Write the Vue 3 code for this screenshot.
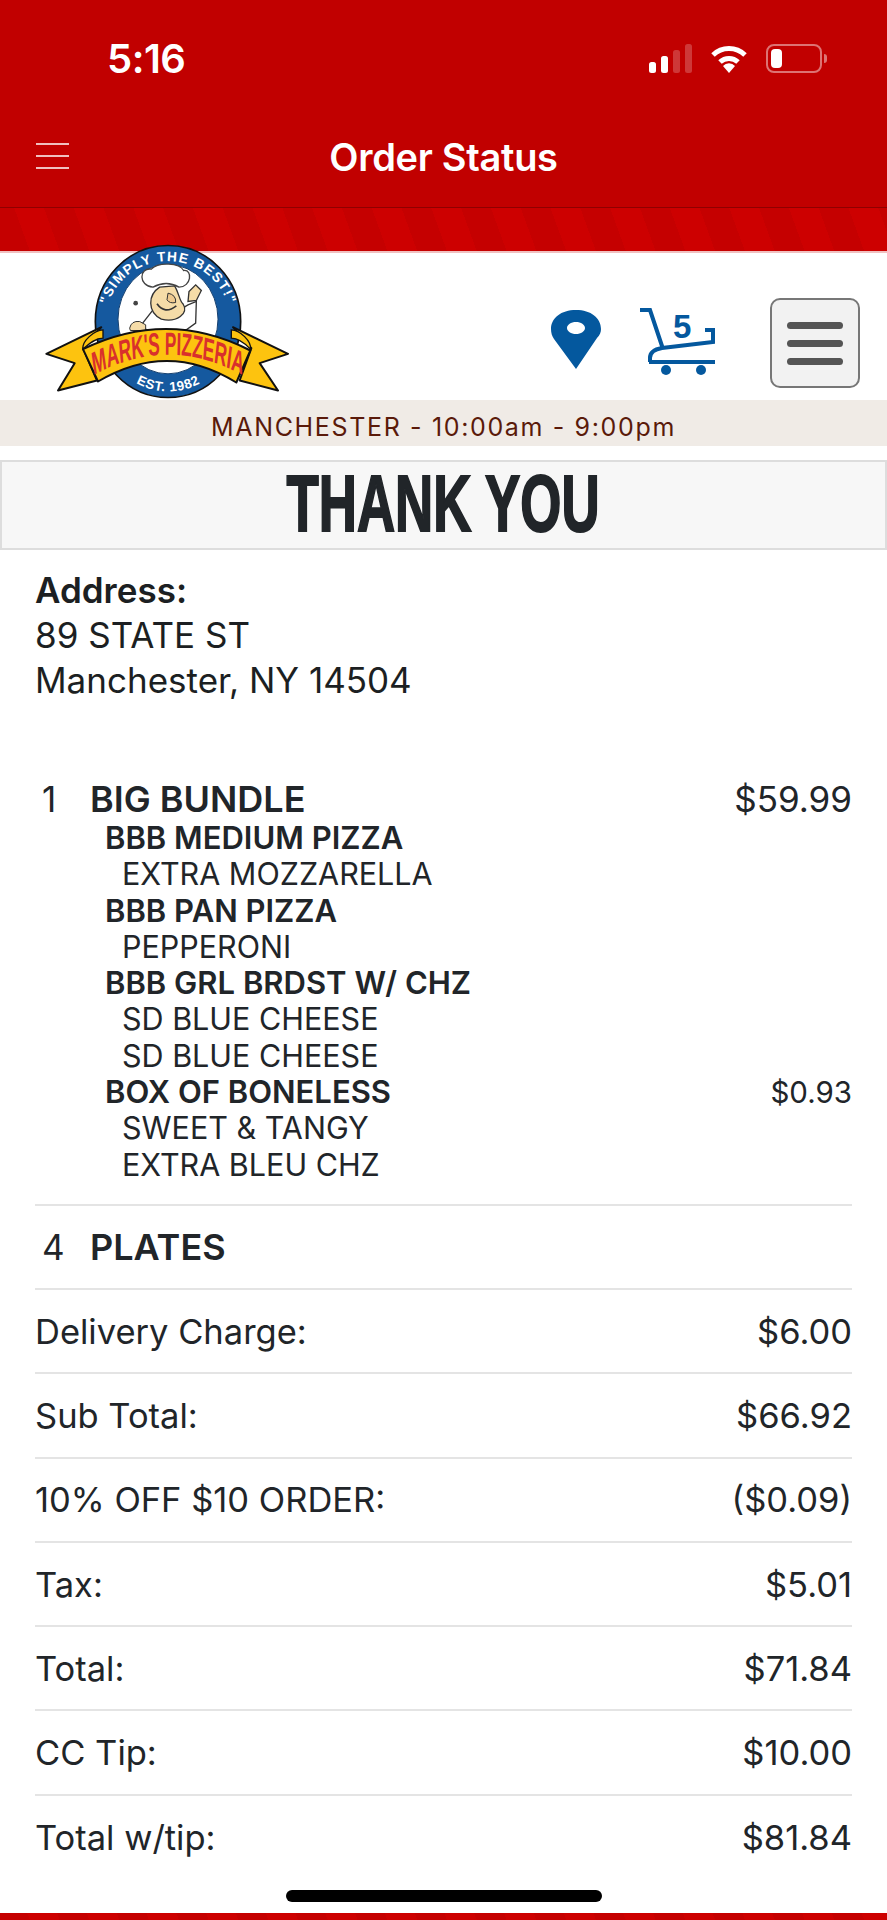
<script setup>
const items = [
  { t: 'BBB MEDIUM PIZZA', s: ['EXTRA MOZZARELLA'] },
  { t: 'BBB PAN PIZZA', s: ['PEPPERONI'] },
  { t: 'BBB GRL BRDST W/ CHZ', s: ['SD BLUE CHEESE', 'SD BLUE CHEESE'] },
  { t: 'BOX OF BONELESS', p: '$0.93', s: ['SWEET & TANGY', 'EXTRA BLEU CHZ'] },
]
const totals = [
  ['Delivery Charge:', '$6.00'],
  ['Sub Total:', '$66.92'],
  ['10% OFF $10 ORDER:', '($0.09)'],
  ['Tax:', '$5.01'],
  ['Total:', '$71.84'],
  ['CC Tip:', '$10.00'],
  ['Total w/tip:', '$81.84'],
]
</script>

<template>
  <div class="page">
    <header class="top">
      <div class="status">
        <span class="time">5:16</span>
        <div class="sysicons">
          <svg width="46" height="30" viewBox="0 0 46 30">
            <rect x="0" y="18" width="7" height="11" rx="2.5" fill="#fff" />
            <rect x="12" y="12" width="7" height="17" rx="2.5" fill="#fff" />
            <rect x="24" y="6" width="7" height="23" rx="2.5" fill="#fff" opacity=".22" />
            <rect x="36" y="0" width="7" height="29" rx="2.5" fill="#fff" opacity=".22" />
          </svg>
          <svg width="38" height="29" viewBox="0 0 38 29">
            <path d="M3 11 A23 23 0 0 1 35 11" fill="none" stroke="#fff" stroke-width="5" />
            <path d="M10 18 A13 13 0 0 1 28 18" fill="none" stroke="#fff" stroke-width="5" />
            <path d="M13 22 A8 8 0 0 1 25 22 L19 29 Z" fill="#fff" />
          </svg>
          <div class="batt"><i></i></div>
        </div>
      </div>
      <div class="nav">
        <span class="burger"><i></i><i></i><i></i></span>
        <span class="nav-title">Order Status</span>
      </div>
    </header>
    <div class="stripes"></div>

    <div class="brand">
      <svg class="logo" width="250" height="157" viewBox="70 40 750 470">
        <ellipse cx="445" cy="275" rx="218" ry="228" fill="#15599f" stroke="#111" stroke-width="5" />
        <ellipse cx="445" cy="268" rx="150" ry="164" fill="#fff" stroke="#15406f" stroke-width="3" />
        <path id="ringArc" d="M262 240 A186 178 0 0 1 628 240" fill="none" />
        <text class="ring" fill="#fff"><textPath href="#ringArc" startOffset="50%" text-anchor="middle">"SIMPLY THE BEST!"</textPath></text>
        <circle cx="348" cy="220" r="7" fill="#444" />
        <path d="M400 172 C355 168 358 112 395 118 C415 96 480 98 492 122 C520 118 515 172 478 172 Q440 150 400 172Z" fill="#fff" stroke="#444" stroke-width="4" />
        <path d="M365 285 L400 240 L480 240 L505 225 L530 215 L528 280 L500 300 L380 300Z" fill="#fff" stroke="#333" stroke-width="4" />
        <path d="M420 172 C385 195 382 245 425 268 C470 280 510 250 490 222 C480 215 478 190 465 168 Z" fill="#f5dca8" stroke="#333" stroke-width="4" />
        <path d="M412 222 Q435 255 470 228" fill="none" stroke="#333" stroke-width="5" />
        <path d="M445 190 Q470 195 468 218 Q450 222 442 210Z" fill="#eec98f" stroke="#333" stroke-width="3" />
        <path d="M505 215 L508 185 L528 165 L545 182 L530 212 Z" fill="#f5dca8" stroke="#333" stroke-width="4" />
        <path d="M330 295 Q335 272 360 275 L378 285 L378 302 L332 302Z" fill="#f5dca8" stroke="#333" stroke-width="3" />
        <path d="M245 292 L80 372 L165 400 L115 482 L232 452 L190 355Z" fill="#fdc30f" stroke="#111" stroke-width="6" stroke-linejoin="round" />
        <path d="M640 292 L805 372 L720 400 L775 482 L660 452 L695 355Z" fill="#fdc30f" stroke="#111" stroke-width="6" stroke-linejoin="round" />
        <path d="M190 358 Q445 235 692 362 L650 458 Q445 330 235 455Z" fill="#fdc30f" stroke="#111" stroke-width="6" stroke-linejoin="round" />
        <path d="M190 358 C185 335 225 300 250 300 L250 325 C225 325 205 345 190 358Z" fill="#fdc30f" stroke="#111" stroke-width="4" />
        <path d="M692 358 C697 335 660 300 635 300 L635 325 C660 325 680 345 692 358Z" fill="#fdc30f" stroke="#111" stroke-width="4" />
        <g transform="translate(445 0) scale(.54 1)">
          <path id="bandArc" d="M-440 444 Q0 306 440 444" fill="none" />
          <text class="band" fill="#d9302c"><textPath href="#bandArc" startOffset="50%" text-anchor="middle">MARK'S PIZZERIA</textPath></text>
        </g>
        <path id="estArc" d="M340 455 Q445 515 552 455" fill="none" />
        <text class="est" fill="#fff"><textPath href="#estArc" startOffset="50%" text-anchor="middle">EST. 1982</textPath></text>
      </svg>
      <div class="actions">
        <svg class="pin" width="50" height="59" viewBox="0 0 50 59"><path fill-rule="evenodd" d="M25 0C10 0 0 8 0 19c0 4 1 7 3 10l22 30 21-31c3-3 4-6 4-9C50 8 40 0 25 0Zm0 12c5 0 9 2.700 9 6s-4 6-9 6-9-2.700-9-6 4-6 9-6Z" fill="#04589e" /></svg>
        <svg class="cart" width="76" height="68" viewBox="0 0 76 68">
          <path d="M0 2H10L23 41M10 54V50C10 44 16 41 22 40L73 34V22H65M9 54H75" fill="none" stroke="#04589e" stroke-width="4" />
          <circle cx="26" cy="62" r="5" fill="#04589e" /><circle cx="61" cy="62" r="5" fill="#04589e" />
          <text x="33" y="30" class="cart-n">5</text>
        </svg>
        <div class="menu"><i></i><i></i><i></i></div>
      </div>
    </div>
    <div class="hours">MANCHESTER - 10:00am - 9:00pm</div>
    <h1 class="thanks"><span>THANK YOU</span></h1>

    <section class="address">
      <strong>Address:</strong>
      <div>89 STATE ST</div>
      <div>Manchester, NY 14504</div>
    </section>

    <section class="order">
      <div class="line first">
        <span class="qty">1</span>
        <div class="grow">
          <div class="head"><b>BIG BUNDLE</b><span>$59.99</span></div>
          <div class="subs">
            <template v-for="it in items" :key="it.t">
              <div class="sub-t"><b>{{ it.t }}</b><span v-if="it.p">{{ it.p }}</span></div>
              <div class="sub-s" v-for="(x, i) in it.s" :key="i">{{ x }}</div>
            </template>
          </div>
        </div>
      </div>
      <div class="line plates">
        <span class="qty">4</span><b>PLATES</b>
      </div>
      <div class="total" v-for="r in totals" :key="r[0]">
        <span>{{ r[0] }}</span><span>{{ r[1] }}</span>
      </div>
    </section>

    <div class="home-wrap"><div class="home"></div></div>
    <div class="stripes bottom"></div>
  </div>
</template>

<style>
html, body { margin: 0; background: #fff; }
</style>

<style scoped>
.page { position: relative; width: 887px; height: 1920px; overflow: hidden; display: flex; flex-direction: column; font-family: Inter, "Liberation Sans", sans-serif; color: #212529; background: #fff; }
.top { height: 208px; background: #c10000; border-bottom: 1px solid #8f0000; box-sizing: border-box; color: #fff; flex: none; }
.status { height: 120px; box-sizing: border-box; padding: 36px 65px 0 107px; display: flex; justify-content: space-between; align-items: flex-start; }
.time { font-size: 40px; line-height: 46px; font-weight: 600; letter-spacing: -.5px; }
.sysicons { display: flex; gap: 18px; align-items: flex-start; padding-top: 8px; margin-left: auto; }
.sysicons svg:first-child { margin-right: -3px; }
.batt { width: 56px; height: 29px; box-sizing: border-box; border: 2px solid rgba(255,255,255,.45); border-radius: 8px; padding: 3px; position: relative; }
.batt::after { content: ""; position: absolute; right: -7px; top: 8px; width: 3px; height: 9px; background: rgba(255,255,255,.45); border-radius: 0 3px 3px 0; }
.batt i { display: block; width: 11px; height: 100%; background: #fff; border-radius: 4px; }
.nav { height: 86px; position: relative; display: flex; align-items: center; justify-content: center; margin-top: -6px; }
.burger { position: absolute; left: 36px; top: 29px; width: 33px; display: flex; flex-direction: column; gap: 10px; }
.burger i { display: block; height: 2px; background: rgba(255,255,255,.75); }
.nav-title { font-size: 38px; font-weight: 600; letter-spacing: -.3px; }
.stripes { height: 45px; flex: none; background: repeating-linear-gradient(70deg, #c50000 0 28px, #cd0000 28px 56px); border-bottom: 2px solid #f0c0c0; box-sizing: border-box; }
.brand { height: 147px; flex: none; display: flex; justify-content: space-between; align-items: flex-start; padding: 0 27px 0 43px; box-sizing: border-box; }
.logo { margin-top: -10px; flex: none; }
.ring { font: 700 41px "Liberation Sans", sans-serif; letter-spacing: 3.500px; }
.band { font: 700 96px "Liberation Sans", sans-serif; }
.est { font: 700 40px "Liberation Sans", sans-serif; letter-spacing: 2px; }
.actions { display: flex; align-items: flex-start; padding-top: 45px; }
.pin { margin-top: 12px; margin-right: 39px; }
.cart { margin-top: 10px; margin-right: 54px; }
.cart-n { font: 700 33px "Liberation Sans", sans-serif; fill: #04589e; }
.menu { width: 90px; height: 90px; box-sizing: border-box; border: 2px solid #777; border-radius: 10px; background: #f2f2f2; display: flex; flex-direction: column; justify-content: center; gap: 11px; padding: 0 15px; }
.menu i { display: block; height: 7px; border-radius: 4px; background: #555; }
.hours { height: 46px; flex: none; line-height: 54px; background: #f0ebe6; color: #5a1a0a; text-align: center; font-size: 25px; letter-spacing: 1.650px; font-family: Inter, "Liberation Sans", sans-serif; }
.thanks { margin: 14px 0 0; height: 90px; flex: none; box-sizing: border-box; border: 2px solid #ddd; background: #f7f7f7; text-align: center; line-height: 84px; font-size: 80px; font-weight: 700; font-family: "Liberation Sans", sans-serif; color: #212529; overflow: hidden; }
.thanks span { display: inline-block; -webkit-text-stroke: 2px #212529; transform: scaleX(.66); white-space: nowrap; }
.address { padding: 18px 35px 0; font-size: 35px; line-height: 45px; height: 227px; box-sizing: border-box; flex: none; font-weight: 400; color: #1c1f22; }
.address strong { font-weight: 600; display: block; }
.order { margin: 0 35px; }
.line { display: flex; border-bottom: 2px solid #e4e4e4; }
.qty { width: 55px; padding-left: 7px; box-sizing: border-box; font-size: 35px; flex: none; line-height: 45px; }
.grow { flex: 1; }
.head { display: flex; justify-content: space-between; font-size: 35px; line-height: 45px; }
.head b, .plates b { font-weight: 600; font-size: 36px; }
.first { height: 429px; box-sizing: border-box; padding-top: 0; }
.subs { padding-left: 15px; font-size: 30.5px; line-height: 36.3px; margin-top: -2px; }
.sub-t { display: flex; justify-content: space-between; }
.sub-t b { font-weight: 600; font-size: 31px; }
.sub-t span { font-size: 29.5px; }
.sub-s { padding-left: 17px; }
.plates { height: 84px; box-sizing: border-box; align-items: center; }
.total { display: flex; justify-content: space-between; align-items: center; height: 84.300px; box-sizing: border-box; border-bottom: 2px solid #e4e4e4; font-size: 34.5px; }
.total:last-child { border-bottom: 0; }
.home-wrap { position: absolute; top: 1890px; left: 0; width: 887px; display: flex; justify-content: center; }
.home { width: 316px; height: 12px; border-radius: 6px; background: #000; }
.stripes.bottom { position: absolute; top: 1913px; left: 0; width: 887px; height: 7px; border: 0; }
</style>
